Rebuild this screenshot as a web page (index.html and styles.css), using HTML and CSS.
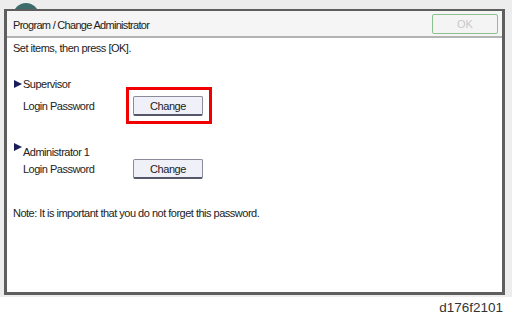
FILE: index.html
```html
<!DOCTYPE html>
<html>
<head>
<meta charset="utf-8">
<link rel="stylesheet" href="styles.css">
</head>
<body>
<div class="screen">
  <div class="bgcircle"></div>
  <div class="frame">
    <div class="titlebar">
      <span class="title">Program / Change Administrator</span>
      <button class="ok">OK</button>
    </div>
    <div class="content">
      <p class="instr">Set items, then press [OK].</p>
      <div class="group g1">
        <div class="head"><span class="tri"></span>Supervisor</div>
        <div class="row row1">
          <span class="label">Login Password</span>
          <span class="hl"><button class="btn">Change</button></span>
        </div>
      </div>
      <div class="group g2">
        <div class="head head2"><span class="tri"></span><span class="ht">Administrator 1</span></div>
        <div class="row row2">
          <span class="label">Login Password</span>
          <button class="btn">Change</button>
        </div>
      </div>
      <p class="note">Note: It is important that you do not forget this password.</p>
    </div>
  </div>
</div>
<div class="caption">d176f2101</div>
</body>
</html>
```
FILE: styles.css
```css
html, body { margin: 0; padding: 0; background: #fff; }
body { width: 512px; height: 318px; overflow: hidden; font-family: "Liberation Sans", Arial, sans-serif; color: #222; }
.screen { position: relative; height: 297px; background: #ededed; padding: 9px 7px 0 4px; box-sizing: border-box; }
.bgcircle { position: absolute; left: 13px; top: 3px; width: 26px; height: 26px; border-radius: 50%; background: #3d6a6a; }
.frame { position: relative; height: 286px; box-sizing: border-box; background: #fff; border-style: solid; border-color: #5e5e5e; border-width: 2px 3px 3px 3px; display: flex; flex-direction: column; }
.titlebar { height: 27px; background: #f5f5f5; border-bottom: 2px solid #b4b4b4; display: flex; align-items: center; justify-content: space-between; padding: 0 4px 0 6px; box-sizing: border-box; flex: none; }
.title { font-size: 11px; letter-spacing: -0.7px; padding-top: 2px; }
.ok { width: 66px; height: 20px; border: 1px solid #8cc08c; border-radius: 2px; background: #f4f4f4; color: #c8c8c8; font-family: inherit; font-size: 11px; padding: 0; margin-top: 1px; }
.content { padding: 0 6px; font-size: 11px; letter-spacing: -0.5px; }
.instr { margin: 3px 0 0 0; line-height: 14px; }
.g1 { margin-top: 23px; }
.head { display: flex; align-items: center; line-height: 12px; }
.tri { flex: none; width: 0; height: 0; border-left: 8px solid #1a1f5a; border-top: 4px solid transparent; border-bottom: 4px solid transparent; margin-left: 1px; margin-right: 1px; }
.row { display: flex; align-items: center; }
.row1 { margin-top: 6px; }
.label { width: 120px; padding-left: 10px; box-sizing: border-box; line-height: 14px; }
.btn { display: block; width: 70px; height: 20px; background: #f0f0f8; border: 1px solid #8a8a9a; border-bottom: 2px solid #55566a; border-radius: 2px; font-family: inherit; font-size: 11px; letter-spacing: -0.4px; color: #222; padding: 0; }
.hl { display: block; border: 3px solid #f00000; padding: 6px 6px 5px 4px; margin: -9px -9px -8px -7px; }
.g2 { margin-top: 27px; }
.head2 { align-items: flex-start; line-height: 14px; }
.ht { margin-top: 2px; }
.row2 { margin-top: 0; }
.note { margin: 27px 0 0 0; line-height: 14px; }
.caption { text-align: right; padding-right: 9px; font-family: "Liberation Sans", Arial, sans-serif; font-size: 13.5px; line-height: 16px; color: #333; margin-top: 3px; }
```
